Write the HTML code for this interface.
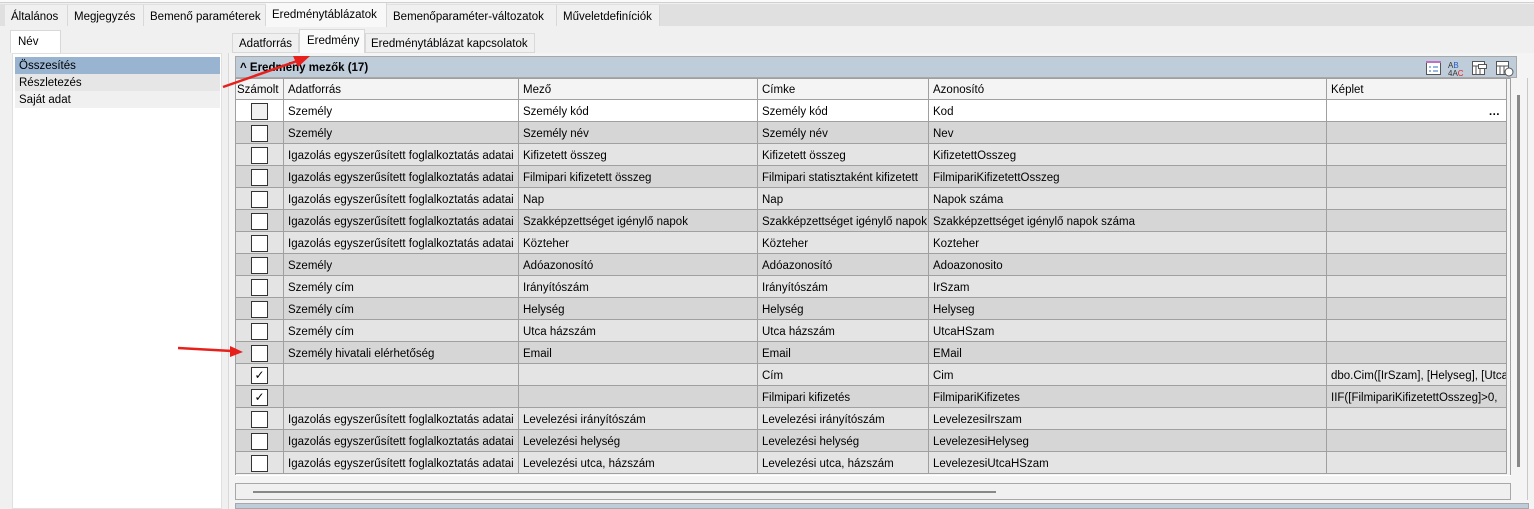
<!DOCTYPE html>
<html><head><meta charset="utf-8"><style>
*{box-sizing:border-box;margin:0;padding:0}
body{width:1534px;height:509px;overflow:hidden;background:#f0f0f0;font-family:"Liberation Sans",sans-serif;font-size:11.5px;color:#000;position:relative}
.a{position:absolute;white-space:nowrap}
.tab{position:absolute;top:5px;height:21px;background:#f0f0f0;border-right:1px solid #d8d8d8;padding:6px 0 0 6px}
.grid{position:absolute;left:235px;top:78px;width:1275px}
.row{position:absolute;left:0;height:22px;width:1272px;border-bottom:1px solid #a0a0a0}
.c{position:absolute;top:0;height:22px;border-right:1px solid #a0a0a0;padding:6px 0 0 4px;overflow:hidden;white-space:nowrap}
.cb{position:absolute;left:16px;top:3px;width:17px;height:17px;border:1px solid #333;background:#fff;font-size:12px;text-align:center;line-height:15px}
</style></head><body>
<div class="a" style="left:0;top:0;width:1534px;height:3px;background:#fafafa;border-bottom:1px solid #d0d0d0"></div>
<div class="a" style="left:0;top:4px;width:1534px;height:22px;background:#e0e0e0"></div>
<div class="tab" style="left:5px;width:63px">Általános</div>
<div class="tab" style="left:68px;width:76px">Megjegyzés</div>
<div class="tab" style="left:144px;width:122px">Bemenő paraméterek</div>
<div class="tab" style="left:266px;width:121px;top:3px;height:24px;background:#f8f8f8">Eredménytáblázatok</div>
<div class="tab" style="left:387px;width:170px">Bemenőparaméter-változatok</div>
<div class="tab" style="left:557px;width:103px">Műveletdefiníciók</div>

<div class="a" style="left:10px;top:30px;width:51px;height:23px;background:#fff;border:1px solid #d8d8d8;border-bottom:none;padding:5px 0 0 7px">Név</div>
<div class="a" style="left:12px;top:53px;width:210px;height:456px;background:#fff;border:1px solid #e0e0e0"></div>
<div class="a" style="left:15px;top:57px;width:205px;height:17px;background:#99b4d1;padding:3px 0 0 4px">Összesítés</div>
<div class="a" style="left:15px;top:74px;width:205px;height:17px;background:#e6e6e6;padding:3px 0 0 4px">Részletezés</div>
<div class="a" style="left:15px;top:91px;width:205px;height:17px;background:#f0f0f0;padding:3px 0 0 4px">Saját adat</div>

<div class="a" style="left:232px;top:33px;width:67px;height:20px;background:#f0f0f0;border:1px solid #d8d8d8;padding:4px 0 0 6px">Adatforrás</div>
<div class="a" style="left:299px;top:29px;width:66px;height:24px;background:#fafafa;border:1px solid #d8d8d8;border-bottom:none;padding:5px 0 0 7px">Eredmény</div>
<div class="a" style="left:365px;top:33px;width:170px;height:20px;background:#f0f0f0;border:1px solid #d8d8d8;padding:4px 0 0 5px">Eredménytáblázat kapcsolatok</div>
<div class="a" style="left:228px;top:53px;width:1306px;height:456px;background:#f4f4f4;border-left:1px solid #d8d8d8"></div>

<div class="a" style="left:235px;top:56px;width:1282px;height:22px;background:#bfcddb;border:1px solid #a8a8a8;font-weight:bold;padding:5px 0 0 4px">^ Eredmény mezők (17)</div>
<svg class="a" style="left:1424px;top:58px" width="95" height="20">
<rect x="2.5" y="3.5" width="14" height="13" fill="#fff" stroke="#555"/><rect x="2" y="3" width="15" height="2" fill="#c070c0"/>
<path d="M5 9h2M5 13h2M9 9h5M9 13h5" stroke="#3070c0"/>
<text x="24" y="10" font-size="8" font-family="Liberation Sans" fill="#333">A<tspan fill="#2060c0">B</tspan></text>
<text x="24" y="18" font-size="8" font-family="Liberation Sans" fill="#333">4A<tspan fill="#e02020">C</tspan></text>
<rect x="48.5" y="3.5" width="12" height="13" fill="#fff" stroke="#555"/><path d="M48 8h13M52 8v9M56 8v9" stroke="#555"/><rect x="54.5" y="6.5" width="8" height="4" fill="#fff" stroke="#555"/>
<rect x="72.5" y="3.5" width="12" height="13" fill="#fff" stroke="#555"/><path d="M72 8h13M76 8v9M80 8v9" stroke="#555"/><circle cx="85" cy="14" r="4" fill="#fff" stroke="#555"/>
</svg>

<div class="grid">
<div class="row" style="top:0;background:#f4f4f4">
<div class="c" style="left:0;width:49px;padding-left:2px">Számolt</div><div class="c" style="left:49px;width:235px">Adatforrás</div><div class="c" style="left:284px;width:239px">Mező</div><div class="c" style="left:523px;width:171px">Címke</div><div class="c" style="left:694px;width:398px">Azonosító</div><div class="c" style="left:1092px;width:180px">Képlet</div>
</div>
<div id="rows"></div>
</div>
<div class="a" style="left:235px;top:78px;width:1275px;height:397px;border-left:1px solid #a0a0a0;border-top:1px solid #a0a0a0;pointer-events:none"></div>
<div class="a" style="left:1510px;top:78px;width:1px;height:397px;background:#a0a0a0"></div>
<div class="a" style="left:1517px;top:95px;width:3px;height:372px;background:#888"></div>
<div class="a" style="left:1527px;top:78px;width:1px;height:422px;background:#c8c8c8"></div>
<div class="a" style="left:235px;top:475px;width:1276px;height:1px;background:#fff"></div>
<div class="a" style="left:235px;top:483px;width:1276px;height:17px;border:1px solid #a8a8a8;background:#f0f0f0"></div>
<div class="a" style="left:253px;top:491px;width:743px;height:2px;background:#888"></div>
<div class="a" style="left:235px;top:503px;width:1294px;height:6px;background:#bfcddb;border:1px solid #a8a8a8"></div>

<svg class="a" style="left:0;top:0" width="1534" height="509">
<path d="M223 87L300 60" stroke="#e8201c" stroke-width="2.5"/><path d="M310 56L293 56L298 67Z" fill="#e8201c"/>
<path d="M178 348L232 351" stroke="#e8201c" stroke-width="2.5"/><path d="M243 352L230 346L230 357Z" fill="#e8201c"/>
</svg>

<script>
const d=[
["","Személy","Személy kód","Személy kód","Kod","…"],
["","Személy","Személy név","Személy név","Nev",""],
["","Igazolás egyszerűsített foglalkoztatás adatai","Kifizetett összeg","Kifizetett összeg","KifizetettOsszeg",""],
["","Igazolás egyszerűsített foglalkoztatás adatai","Filmipari kifizetett összeg","Filmipari statisztaként kifizetett","FilmipariKifizetettOsszeg",""],
["","Igazolás egyszerűsített foglalkoztatás adatai","Nap","Nap","Napok száma",""],
["","Igazolás egyszerűsített foglalkoztatás adatai","Szakképzettséget igénylő napok","Szakképzettséget igénylő napok","Szakképzettséget igénylő napok száma",""],
["","Igazolás egyszerűsített foglalkoztatás adatai","Közteher","Közteher","Kozteher",""],
["","Személy","Adóazonosító","Adóazonosító","Adoazonosito",""],
["","Személy cím","Irányítószám","Irányítószám","IrSzam",""],
["","Személy cím","Helység","Helység","Helyseg",""],
["","Személy cím","Utca házszám","Utca házszám","UtcaHSzam",""],
["","Személy hivatali elérhetőség","Email","Email","EMail",""],
["✓","","","Cím","Cim","dbo.Cim([IrSzam], [Helyseg], [Utca"],
["✓","","","Filmipari kifizetés","FilmipariKifizetes","IIF([FilmipariKifizetettOsszeg]>0,"],
["","Igazolás egyszerűsített foglalkoztatás adatai","Levelezési irányítószám","Levelezési irányítószám","LevelezesiIrszam",""],
["","Igazolás egyszerűsített foglalkoztatás adatai","Levelezési helység","Levelezési helység","LevelezesiHelyseg",""],
["","Igazolás egyszerűsített foglalkoztatás adatai","Levelezési utca, házszám","Levelezési utca, házszám","LevelezesiUtcaHSzam",""]];
const L=[0,49,284,523,694,1092],W=[49,235,239,171,398,180];
let h="";
d.forEach((r,i)=>{const bg=i==0?"#fff":(i%2?"#d6d6d6":"#e4e4e4");
h+=`<div class="row" style="top:${22+i*22}px;background:${bg}">`;
h+=`<div class="c" style="left:0;width:49px"><div class="cb" style="${i==0?'background:#f0f0f0':''}">${r[0]}</div></div>`;
for(let k=1;k<6;k++){let t=r[k];let st="";if(k==5&&t=="…"){st="text-align:right;padding-right:6px;font-weight:bold"}
h+=`<div class="c" style="left:${L[k]}px;width:${W[k]}px;${st}">${t}</div>`}
h+="</div>"});
document.getElementById("rows").innerHTML=h;
</script>
</body></html>
